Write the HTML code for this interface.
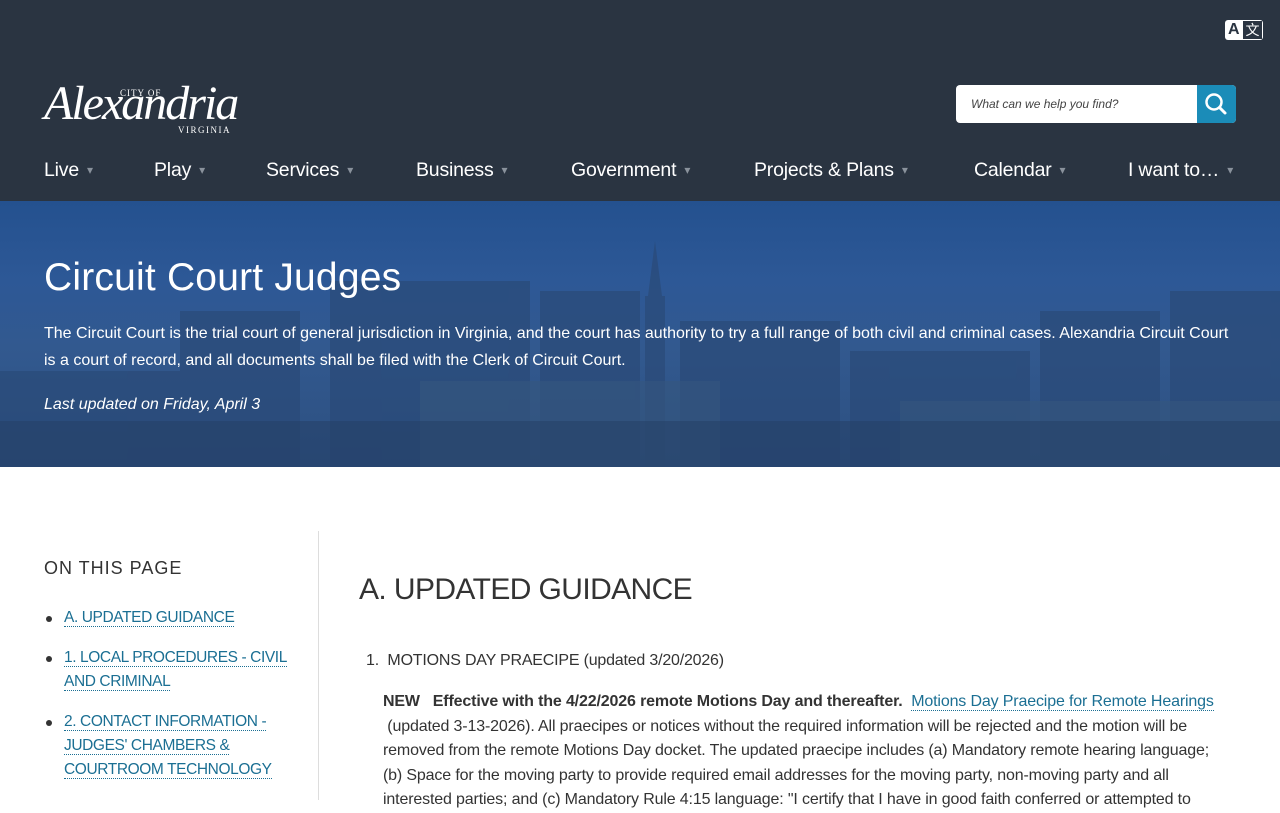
<!DOCTYPE html>
<html><head><meta charset="utf-8">
<style>
*{margin:0;padding:0;box-sizing:border-box}
body{width:1280px;height:800px;overflow:hidden;background:#fff;font-family:"Liberation Sans",sans-serif;color:#333}
.hdr{position:absolute;left:0;top:0;width:1280px;height:201px;background:#2a3441}
.tr{position:absolute;left:1225px;top:20px;width:38px;height:20px;background:#fff;border-radius:3px;overflow:hidden}
.tr b{position:absolute;left:3px;top:1px;font-size:16px;color:#2a3441;line-height:18px}
.tr span{position:absolute;right:1px;top:1px;width:19px;height:18px;background:#2a3441;color:#fff;font-size:14px;line-height:18px;text-align:center;font-family:"Noto Sans CJK SC",sans-serif}
.logo{position:absolute;left:44px;top:62px;color:#fff;font-family:"Liberation Serif",serif;width:200px;height:80px}
.logo .big{font-style:italic;font-size:48px;letter-spacing:-2px;position:absolute;left:0;top:14px;white-space:nowrap}
.logo .c{position:absolute;left:76px;top:26px;font-size:9px;letter-spacing:1px;white-space:nowrap;line-height:10px}
.logo .v{position:absolute;left:134px;top:63px;font-size:9px;letter-spacing:1.5px}
.search{position:absolute;left:956px;top:85px;width:280px;height:38px;background:#fff;border-radius:4px;overflow:hidden}
.search i{position:absolute;left:15px;top:12px;font-size:12px;color:#444}
.search b{position:absolute;right:0;top:0;width:39px;height:38px;background:#1b8cb8}
nav{position:absolute;top:159px;left:0;width:1280px;font-size:19.5px;color:#fff;letter-spacing:-0.2px}
nav span{position:absolute;white-space:nowrap}
nav span:after{content:"▾";font-size:12px;color:#8a929c;margin-left:8px;position:relative;top:-2px}
.hero{position:absolute;left:0;top:201px;width:1280px;height:266px;overflow:hidden;background:linear-gradient(180deg,#24518f 0%,#2d5896 30%,#32598f 55%,#2c4f80 100%)}
.hero svg{position:absolute;left:0;top:0}
.hero h1{position:absolute;left:44px;top:55px;font-size:39px;font-weight:normal;color:#fff;letter-spacing:0.2px}
.hero p{position:absolute;left:44px;top:119px;width:1200px;font-size:16px;line-height:27px;color:#fff}
.hero .u{top:190px;font-style:italic}
.side{position:absolute;left:318px;top:531px;width:1px;height:269px;background:#ddd}
.oth{position:absolute;left:44px;top:558px;font-size:18px;letter-spacing:1px;color:#333}
ul{position:absolute;left:64px;top:606px;width:250px;list-style:none;font-size:15.5px;line-height:24px;letter-spacing:-0.4px}
ul li{position:relative;margin-bottom:16px;color:#1b6f93}
ul li:before{content:"";position:absolute;left:-18px;top:10px;width:6px;height:6px;border-radius:50%;background:#333}
ul a{border-bottom:1px dotted #1b6f93}
h2{position:absolute;left:359px;top:573px;font-size:30px;font-weight:normal;color:#333;letter-spacing:-0.6px}
.item{position:absolute;left:366px;top:652px;font-size:16px;letter-spacing:-0.2px}
.body{position:absolute;left:383px;top:690px;width:860px;font-size:16px;line-height:24.5px;color:#333;letter-spacing:-0.15px}
.body a{color:#1b6f93;border-bottom:1px dotted #1b6f93}
</style></head><body>
<div class="hdr">
<div class="tr"><b>A</b><span>文</span></div>
<div class="logo"><div class="big">Alexandria</div><div class="c">CITY OF</div><div class="v">VIRGINIA</div></div>
<div class="search"><i>What can we help you find?</i><b><svg width="39" height="38"><circle cx="17" cy="17" r="7.5" fill="none" stroke="#fff" stroke-width="2.5"/><line x1="22.5" y1="22.5" x2="28" y2="28" stroke="#fff" stroke-width="3" stroke-linecap="round"/></svg></b></div>
<nav><span style="left:44px">Live</span><span style="left:154px">Play</span><span style="left:266px">Services</span><span style="left:416px">Business</span><span style="left:571px">Government</span><span style="left:754px">Projects &amp; Plans</span><span style="left:974px">Calendar</span><span style="left:1128px">I want to…</span></nav>
</div>
<div class="hero">
<svg width="1280" height="266"><g fill="#2a4a78" opacity=".7">
<rect x="180" y="110" width="120" height="156"/><rect x="330" y="80" width="200" height="186"/><rect x="540" y="90" width="100" height="176"/><path d="M648 95 L655 40 L662 95Z"/><rect x="645" y="95" width="20" height="171"/><rect x="680" y="120" width="160" height="146"/><rect x="850" y="150" width="180" height="116"/><rect x="1040" y="110" width="120" height="156"/><rect x="1170" y="90" width="110" height="176"/><rect x="0" y="170" width="180" height="96"/></g>
<g fill="#36577f" opacity=".6"><rect x="420" y="180" width="300" height="86"/><rect x="900" y="200" width="380" height="66"/><path d="M480 250 L515 215 L550 250Z"/></g>
<rect x="0" y="220" width="1280" height="46" fill="#243e63" opacity=".5"/></svg>
<h1>Circuit Court Judges</h1>
<p>The Circuit Court is the trial court of general jurisdiction in Virginia, and the court has authority to try a full range of both civil and criminal cases. Alexandria Circuit Court is a court of record, and all documents shall be filed with the Clerk of Circuit Court.</p>
<p class="u">Last updated on Friday, April 3</p>
</div>
<div class="side"></div>
<div class="oth">ON THIS PAGE</div>
<ul><li><a>A. UPDATED GUIDANCE</a></li><li><a>1. LOCAL PROCEDURES - CIVIL<br>AND CRIMINAL</a></li><li><a>2. CONTACT INFORMATION -<br>JUDGES' CHAMBERS &amp;<br>COURTROOM TECHNOLOGY</a></li></ul>
<h2>A. UPDATED GUIDANCE</h2>
<div class="item">1.&nbsp; MOTIONS DAY PRAECIPE (updated 3/20/2026)</div>
<div class="body"><b>NEW&nbsp;&nbsp; Effective with the 4/22/2026 remote Motions Day and thereafter.</b>&nbsp; <a>Motions Day Praecipe for Remote Hearings</a><br>&nbsp;(updated 3-13-2026). All praecipes or notices without the required information will be rejected and the motion will be<br>removed from the remote Motions Day docket. The updated praecipe includes (a) Mandatory remote hearing language;<br>(b) Space for the moving party to provide required email addresses for the moving party, non-moving party and all<br>interested parties; and (c) Mandatory Rule 4:15 language: "I certify that I have in good faith conferred or attempted to</div>
</body></html>
